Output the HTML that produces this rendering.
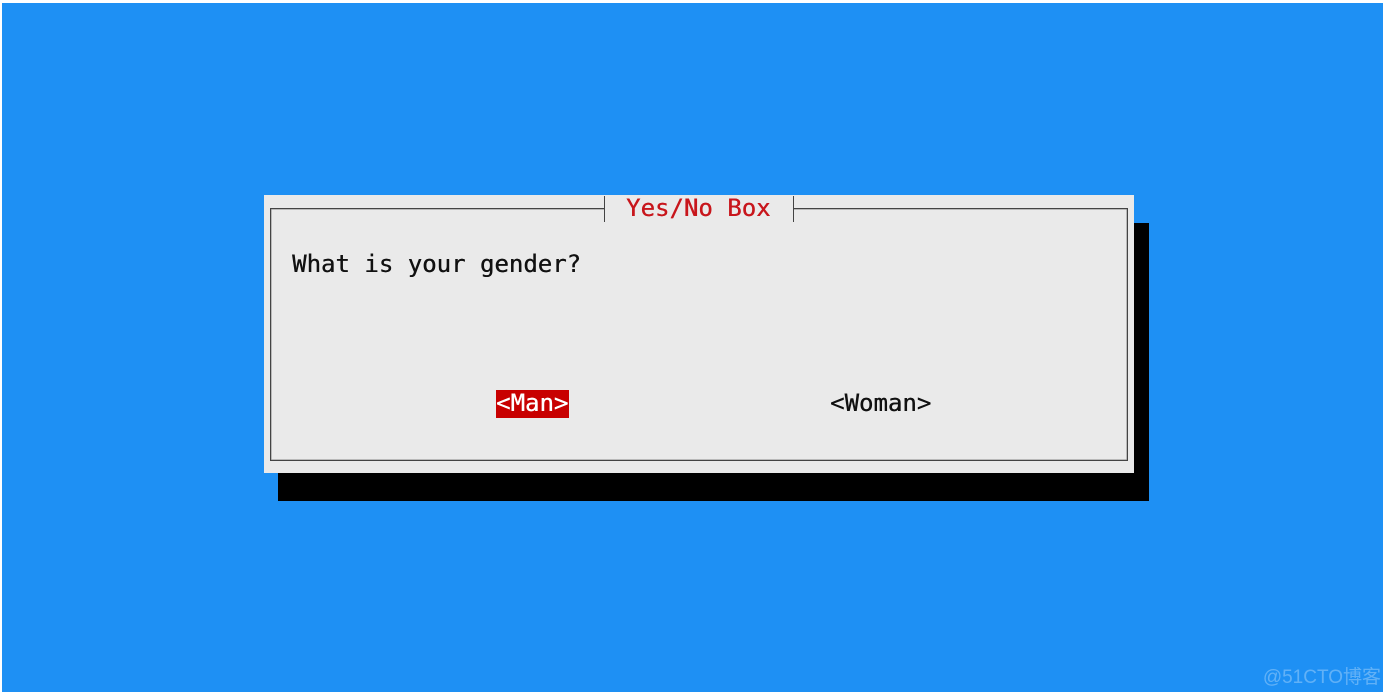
<!DOCTYPE html>
<html><head><meta charset="utf-8"><style>
html,body{margin:0;padding:0}
body{width:1383px;height:692px;background:#fff;position:relative;overflow:hidden}
.bg{position:absolute;left:2px;top:3px;right:0;bottom:0;background:#1e90f4}
.abs{position:absolute}
.t{position:absolute;font-family:"DejaVu Sans Mono","Liberation Mono",monospace;font-size:24px;line-height:28px;white-space:pre;color:#111;text-shadow:0.4px 0 0 currentColor}
</style></head><body>
<div class="bg"></div>
<div class="abs" style="left:278px;top:223px;width:871px;height:278px;background:#000"></div>
<div class="abs" style="left:264px;top:195px;width:870px;height:278px;background:#eaeaea"></div>
<div class="abs" style="left:270px;top:208px;width:856px;height:251px;border:1px solid #444;box-shadow:inset 0 0 0 0.5px #888"></div>
<div class="abs" style="left:604px;top:200px;width:190px;height:14px;background:#eaeaea"></div>
<div class="abs" style="left:604px;top:196px;width:1px;height:26px;background:#444"></div>
<div class="abs" style="left:793px;top:196px;width:1px;height:26px;background:#444"></div>
<div class="t" style="left:626px;top:194px;color:#c8161c">Yes/No Box</div>
<div class="t" style="left:292px;top:250px">What is your gender?</div>
<div class="abs" style="left:496px;top:390px;width:73px;height:28px;background:#c80000"></div>
<div class="t" style="left:496px;top:389px;color:#fff">&lt;Man&gt;</div>
<div class="t" style="left:830px;top:389px">&lt;Woman&gt;</div>
<div class="abs" style="right:2px;bottom:3px;font-family:'Liberation Sans','Noto Sans CJK SC',sans-serif;font-size:19px;color:rgba(255,255,255,0.3)">@51CTO博客</div>
</body></html>
